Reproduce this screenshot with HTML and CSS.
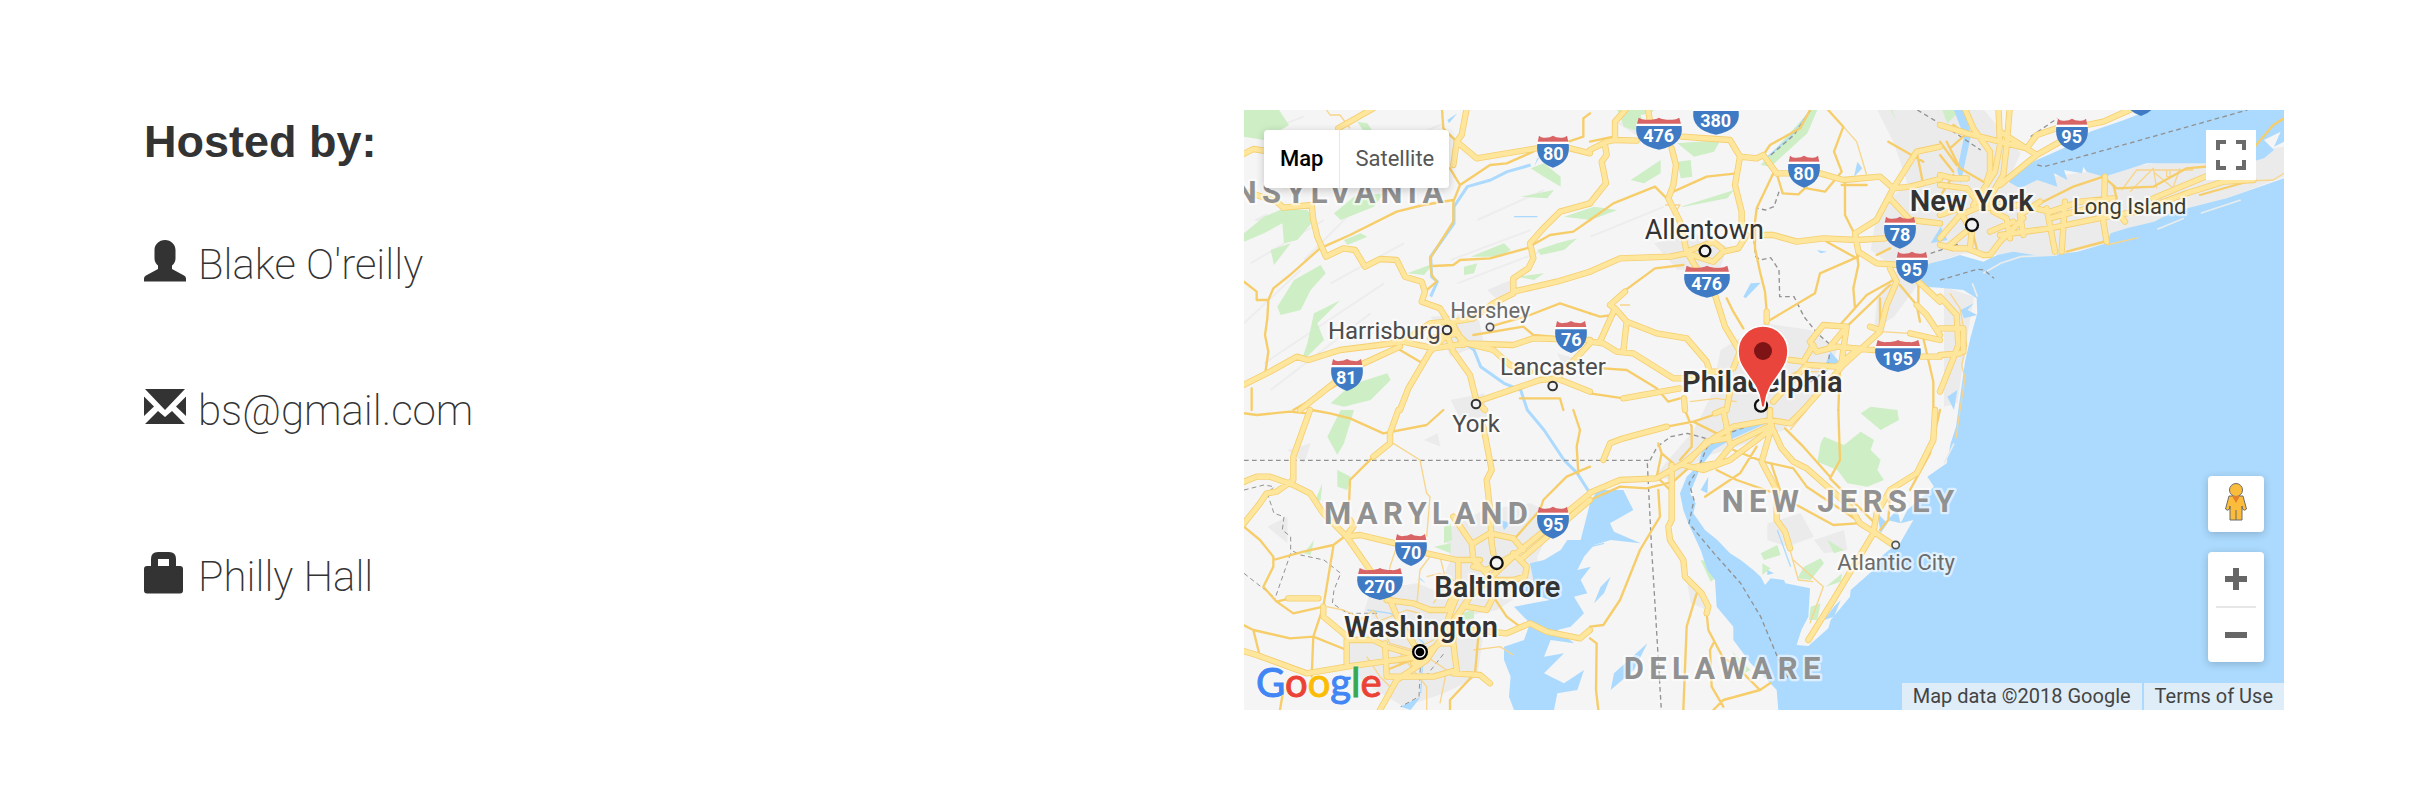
FILE: index.html
```html
<!DOCTYPE html>
<html lang="en">
<head>
<meta charset="utf-8">
<title>Hosted by</title>
<link rel="stylesheet" href="styles.css">
</head>
<body>
<main class="event">
  <section class="host">
    <h2 class="host-title">Hosted by:</h2>
    <ul class="host-list">
      <li class="host-item">
        <svg class="icon" viewBox="0 0 42 42" aria-hidden="true"><path d="M21 0C27 0 31.500 4.500 31.500 10V18.500C31.500 21.500 30 24 28 25.500V29L40 35.500Q42 36.700 42 38.500V41.500H0V38.500Q0 36.700 2 35.500L14 29V25.500C12 24 10.500 21.500 10.500 18.500V10C10.500 4.500 15 0 21 0Z"/></svg>
        <span>Blake O'reilly</span>
      </li>
      <li class="host-item">
        <svg class="icon" viewBox="0 0 42 42" aria-hidden="true"><path d="M1 3H41L21 24ZM0 10.500L10 20.500 0 30ZM42 10.500V30L32 20.500ZM1 38L14 25 21 31 28 25 41 38Z"/></svg>
        <span>bs@gmail.com</span>
      </li>
      <li class="host-item host-item-venue">
        <svg class="icon" viewBox="0 0 42 42" aria-hidden="true"><path fill-rule="evenodd" d="M7 14V7Q7 0 14 0H25Q32 0 32 7V14H36Q39 14 39 17V38.500Q39 41.500 36 41.500H3Q0 41.500 0 38.500V17Q0 14 3 14ZM14 14H25V7H14Z"/></svg>
        <span>Philly Hall</span>
      </li>
    </ul>
  </section>

  <section class="map" aria-label="Map">
    <svg class="map-canvas" viewBox="0 0 3120 1800" preserveAspectRatio="xMidYMid slice">
      <defs>
        <g id="shield-2">
          <path fill="#d96466" d="M6 0Q14 8 25 6Q40 6 48 0Q56 6 71 6Q82 8 90 0L94 19H2Z"/>
          <path fill="#fff" d="M0 18H96V27H0Z"/>
          <path fill="#3e7bc4" d="M1 25H95Q102 78 48 96Q-6 78 1 25Z"/>
        </g>
        <g id="shield-3">
          <path fill="#d96466" d="M8 0Q20 8 35 6Q58 6 69 0Q80 6 103 6Q118 8 130 0L135 19H3Z"/>
          <path fill="#fff" d="M0 18H138V27H0Z"/>
          <path fill="#3e7bc4" d="M1 25H137Q144 82 69 96Q-6 82 1 25Z"/>
        </g>
        <g id="highways">
          <path transform="translate(-12 -15)" d="M0 152L40 132 90 140M0 255L50 270 110 290 130 308 215 300 220 345 232 395 258 455 310 430 345 435 375 485 420 462 470 465 495 515 545 530 555 560 545 590 600 610 625 650 655 690 680 715 820 720 880 700 1050 705M0 845L90 800 170 755 205 765 300 735 420 720 490 710 570 655 625 650M490 710L580 730 680 715 760 735 810 780 870 800M570 700L655 685M625 700L640 740 690 810 710 890 735 915M180 915L300 820 360 780 480 725M480 915L505 850 570 740 620 690M295 70L400 10M682 0L665 90 650 110 710 160 890 130M650 110L640 180M990 130L1050 145M1050 295L960 320 910 370 870 415 880 460 865 490 820 520 820 560 950 530 1050 500M640 650L700 640 760 595 820 565M640 660L670 720M710 890L900 825 950 820 1050 715M950 820L1050 860"/>
          <path transform="translate(1038 -15)" d="M0 135L50 110 75 105 140 107M75 105L75 50 110 10M45 120L50 150 35 170 48 235 0 295M172 0L180 50M245 130L258 180 250 240 235 280 270 350 290 440 320 490M275 95L420 105 450 155 500 160 520 150 560 205 600 205M690 205L760 225 870 215 910 250M450 155L435 240 455 320 455 360M470 390L445 430 400 440 370 470 290 445 240 455 90 460 0 500M290 440L370 410 395 430M520 390L550 390 620 410 700 400 800 405 885 400M910 250L860 345 795 385 805 440 860 475 930 480M910 250L980 140 1050 125M910 250L960 245 1050 222M900 280L960 345 1050 355M375 570L405 665 450 740 430 790M900 490L920 530 890 600 870 680 760 780 640 915M985 530L1050 590M980 600L1010 630 1050 690M0 710L40 715 80 740 130 745 250 820 330 820M75 610L60 600 105 560M75 610L110 650 200 685 290 700 350 770 360 800 390 800M110 650L100 740M75 610L30 710M100 880L270 850M660 710L700 660 770 665 755 770M770 665L720 725M660 710L680 740 740 725 850 735M655 780L740 785 800 735M600 765L640 770 670 720M840 665L870 675M960 685L1050 705M995 755H1050M410 915L420 860 400 820M530 650L530 620M285 915L282 880M550 890L650 780"/>
          <path transform="translate(2088 -15)" d="M0 60L80 85 180 110 260 130 290 90 350 70M70 0L100 70 150 140 150 200 140 230M175 0L180 120 165 200 100 300M210 0L200 120 190 210 130 310M0 210L40 220 80 220M0 240L80 250 130 310M290 150L180 80M180 240L290 150 360 110M440 60L490 50 580 10M0 420L40 430 80 430 130 450 150 450 180 410 250 340M95 380L90 430M0 330L60 310M0 400L60 330 180 280M60 320L90 370 30 420M130 310L240 300 330 320 420 290 520 280M320 310L345 440M375 290L365 440M180 390L330 370 500 335 590 320 740 265 850 230 940 225M495 215L490 350 500 410M210 400L200 340 160 320M250 390L240 330 300 290M640 280L760 230 820 205M330 340L480 300M540 330L555 350M150 380L220 350M0 575L50 630 55 720 40 760 0 860M0 670L70 670 70 740M0 750L60 745"/>
          <path transform="translate(-12 900)" d="M0 220L50 200 90 200 160 225 210 250 250 310 320 380 360 375 465 400M560 430L650 450 720 450M320 380L390 480M0 355L60 280 80 250 110 245 160 210 160 140 210 0M320 375L340 350 330 330M475 0L450 70 450 100 400 140M730 50L755 180 740 210 750 300 755 400 760 430M700 400L750 370 820 385 850 420M1050 250L830 430 690 560 600 690 560 750 470 810 420 900M1050 270L840 450M640 320L695 400 700 450 760 510 820 510 855 500 860 470 820 430M655 455L655 520 620 600M440 570L520 580 570 600 630 600M450 570L480 640 520 700 540 740M250 590L250 620 310 670 330 690 400 690 440 710 540 740 600 700 640 700 650 780 580 800 440 800 435 700M320 690L320 760M0 720L50 735 200 790 320 770 430 755 540 740M640 790L720 795 750 820M700 660L800 670 870 640 920 665 1020 685 1050 660M145 565L235 565M690 560L640 640 640 690M650 560L600 690M680 590L740 600 760 560M700 470L740 480 830 430M520 760L600 700"/>
          <path transform="translate(1038 900)" d="M0 248L90 210 200 205 280 160 370 85 430 50 540 30 600 40 640 0M280 165L340 180 420 150 500 90 545 55M320 170L380 160 430 100 545 45M540 0V40M545 50L515 155 560 240 560 330 585 365 600 415M545 50L575 115 610 155 650 175 780 290 810 340 850 365 910 405M40 150L60 100 100 85 230 50M375 10L400 0 410 50 420 100M245 165L245 330 235 350 240 390 280 450 285 500 335 550 355 590 350 610M655 690L730 570 850 370 860 310 900 240 980 190 1030 90 1035 0M300 150L350 95 410 85"/>
        </g>
      </defs>

      <rect width="3120" height="1800" fill="#f5f5f5"/>

      <g class="urban">
        <path d="M1900 0H2220L2330 130 2290 220 2500 190 3120 110V200L2590 400 2430 440 2160 430 2060 460 2010 540 1950 620 1890 660 1900 560 1960 480 1880 420 1900 300 1990 220 1950 100Z"/>
        <path d="M1430 720L1560 640 1700 660 1780 720 1720 850 1620 960 1480 1010 1380 1040 1290 1110 1230 1100 1350 960 1400 860Z"/>
        <path d="M600 1260L720 1200 860 1180 940 1220 880 1340 880 1420 760 1500 650 1520 580 1440 620 1350Z"/>
        <path d="M380 1440L520 1420 640 1470 720 1560 700 1700 600 1750 480 1790 360 1720 300 1640 350 1540Z"/>
        <path d="M1230 400L1350 370 1450 410 1430 470 1300 480ZM560 620L700 610 720 700 620 740ZM730 540L800 510 800 560 760 570ZM620 870L720 850 730 920 650 930ZM1570 1240L1670 1210 1710 1280 1630 1310 1570 1290ZM1710 1290L1800 1260 1810 1320 1740 1330Z"/>
        <path d="M70 1250L130 1220 130 1300ZM130 1020L200 1000 180 1060ZM540 990L580 970 590 1010ZM940 730L1010 750 960 780ZM1330 1420L1370 1440 1390 1500 1340 1480ZM2100 530L2190 560 2160 740 2140 880 2100 890ZM1120 40L1180 20 1200 90ZM30 330L70 310 60 340Z"/>
      </g>
      <g class="hills">
        <path d="M60 760L420 520M80 840L380 610M260 520L480 400M20 460L240 330M620 450L860 360M640 520L980 390M700 330L900 240M1040 380L1260 290M0 640L170 480M180 450L330 300M20 80L180 20M480 90L600 40"/>
      </g>
      <g class="parks">
        <path d="M0 0H105L135 45 60 90 0 80ZM340 35L370 40 390 70 360 65ZM0 370L60 320 120 295 190 300 210 330 160 390 120 400 115 340 60 370 0 395Z"/>
        <path d="M80 420L140 400 90 465ZM270 310L330 260 420 250 390 290 290 330ZM300 390L350 370 370 380 310 405ZM100 590L150 510 230 465 245 490 200 540 170 600 110 615Z"/>
        <path d="M210 610L290 570 220 640 240 690 170 760 190 700ZM260 880L320 825 430 790 440 810 380 870 300 890ZM860 175L900 160 950 200 950 230 900 200ZM830 260L930 240 910 265ZM680 440L780 400 800 420 770 440Z"/>
        <path d="M960 320L1050 290 1120 300 1040 330ZM880 420L940 400 1000 385 960 420 890 435ZM660 470L700 460 690 490 660 495ZM490 490L570 460 540 495ZM820 500L900 490 870 510ZM250 980L290 900H330L300 1000 280 1035Z"/>
        <path d="M1170 60L1200 50 1190 15 1220 10 1230 0H1120L1140 50ZM1300 100L1430 90 1410 125 1350 140ZM1160 210L1250 150 1250 190 1200 220ZM1300 155L1340 150 1345 200 1310 205ZM1310 290L1440 250 1470 240 1450 265 1320 290ZM1550 165L1600 110 1700 0H1720L1690 70 1580 170Z"/>
        <path d="M1720 1055L1730 1000 1740 980 1800 1005 1850 965 1890 990 1880 1020 1910 1050 1900 1080 1920 1110 1870 1130 1810 1120 1780 1080ZM1850 910L1880 890 1960 900 1965 930 1910 960Z"/>
        <path d="M1550 1330L1600 1305 1610 1335 1560 1350ZM1555 1360L1580 1375 1555 1395ZM1680 1370L1730 1345 1740 1360 1700 1410 1660 1405ZM1370 1350L1400 1355 1420 1400 1400 1415ZM1700 1490L1730 1480 1720 1530 1695 1530ZM1745 1430L1795 1390 1790 1415ZM1750 1290L1800 1320 1770 1330Z"/>
        <path d="M600 1250L620 1240 625 1290 600 1300ZM570 1310L620 1300 620 1330ZM655 1510L690 1500 690 1525 660 1530ZM280 1080L320 1100 310 1140 280 1130ZM210 1180L235 1120 230 1170ZM180 1330L210 1290 200 1335ZM1465 1625L1520 1680 1500 1690ZM2095 0H2150L2110 40ZM1940 0L1955 30 1945 0Z"/>
      </g>

      <g class="water">
        <path d="M2718 0H3120V1800H1603L1598 1740 1570 1710 1520 1660 1468 1590 1468 1550 1418 1490 1413 1410 1390 1380 1370 1320 1333 1240 1318 1200 1308 1150 1328 1100 1363 1065 1375 1020 1395 990 1458 965 1568 925V940L1468 985 1408 1020 1370 1070 1358 1100 1338 1150 1355 1180 1348 1210 1383 1260 1420 1290 1458 1330 1490 1350 1528 1380 1550 1400 1563 1425 1580 1405 1620 1410 1624 1420 1698 1435 1693 1520 1672 1560 1658 1605 1693 1608 1753 1555 1760 1530 1785 1500 1818 1460 1820 1440 1888 1380 1900 1350 1935 1320 1968 1300 2008 1230 1970 1240 1990 1200 2070 1130 2050 1100 2108 1060 2120 1000 2136 950 2145 885 2163 755 2180 680 2200 610 2198 565 2158 540 2088 533 2040 530 2020 480 2060 460 2118 445 2148 435 2218 455 2260 435 2308 425 2370 435 2428 435 2500 425 2588 400 2600 370 2648 355 2730 335 2788 305 2948 265 3120 205V95L3090 110 3110 65 3060 90 3090 120 3060 145 2990 165 2888 160 2708 160 2628 185 2580 200 2528 185 2518 170 2514 190 2460 180 2470 210 2430 190 2440 230 2380 210 2328 235 2293 215 2330 175 2378 150 2468 110 2538 65 2640 30Z"/>
        <path d="M1038 1180L1060 1140 1138 1140 1150 1165 1168 1200 1098 1240 1110 1265 1190 1300 1100 1290 1050 1305 1020 1340 1000 1380 1040 1370 1010 1410 1030 1450 990 1460 1020 1510 980 1550 940 1560 990 1600 920 1590 900 1640 960 1630 900 1690 960 1720 1020 1680 1000 1740 940 1750 930 1800H810L795 1760 800 1700 780 1650 780 1610 840 1590 858 1540 810 1490 918 1470 860 1450 800 1430 870 1420 858 1360 900 1350 950 1320 970 1290 1010 1290Z"/>
        <path d="M1393 1100L1370 1140 1390 1150ZM1570 1380L1590 1390 1570 1395ZM1718 420L1750 425 1730 430ZM1498 560L1520 520 1550 518 1505 565ZM1745 760L1760 725 1790 760 1750 770ZM2150 1040L2105 1050 2130 1005ZM1830 200L1840 155 1855 175ZM870 170L890 135 910 130 880 145ZM610 30L640 10 615 40ZM525 1400L545 1420 530 1410ZM2130 0H2170L2180 80 2150 220 2140 180 2160 80ZM2045 485L2110 480 2110 520 2060 530Z"/>
        <path d="M2150 600L2190 580 2170 600 2200 615 2160 625ZM2110 860L2140 840 2130 900ZM1900 1210L1930 1240 1910 1270ZM1930 1230L1960 1200 1970 1240ZM1740 1530L1770 1490 1790 1470 1770 1520ZM2090 350L2060 400 2110 390ZM1170 1680L1210 1600 1110 1690 1100 1740ZM1050 1480L1080 1450 1100 1400 1070 1430ZM770 1230L800 1240 780 1260ZM470 1790L530 1760 500 1800Z"/>
        <g class="rivers">
          <path d="M860 165L790 185 740 210 670 230 630 290 630 340 560 440 563 500 580 515 560 560 M610 660L690 720 710 770 780 820 830 840 850 900 900 960 960 1050 1000 1090 1038 1150"/>
          <path class="creek" d="M810 320L880 320M1700 0L1640 80 1560 150M1600 1260L1640 1370M370 1500L440 1510 540 1600 530 1750M1080 1300L1040 1310"/>
        </g>
      </g>

      <g class="barrier">
        <path d="M2218 490L2270 460 2330 440 2440 435M2740 358L2820 325M2185 520L2200 560M2870 310L2990 270M2100 1060L2130 1000"/>
      </g>

      <g class="borders">
        <path d="M0 1051H1218M1218 1051L1240 1010 1280 980 1330 970 1385 985M1210 1060L1222 1300 1240 1600 1252 1800M1568 930L1450 970 1390 1010 1360 1080 1335 1120 1350 1170 1335 1240 1410 1330 1490 1420 1550 1520 1600 1640 1635 1710"/>
        <path d="M1700 0L1650 75 1575 140M1605 245L1590 290 1565 300 1540 295M1530 390L1535 440 1550 450 1580 443 1605 480 1607 560 1650 560 1680 620 1720 670 1760 705 1750 780 1650 850"/>
        <path d="M2088 510L2200 478 2220 480 2250 505M2380 165L2400 170 2530 135 3010 0M2360 80L2440 25M2350 100L2370 150M2020 0L2120 60 2210 120M2060 430L2150 400"/>
        <path class="border-river" d="M0 1140L60 1125 90 1130 70 1150 90 1210 120 1220 115 1260 140 1280 140 1320 170 1335 240 1350 290 1390 270 1440 265 1480 310 1510 400 1510M140 1330L95 1460M0 1390L95 1465M530 1650L525 1760 470 1790M545 1700L600 1630"/>
      </g>

      <g class="roads-thin">
        <path transform="translate(-12 900)" d="M460 100L540 150 560 250 570 260 560 380M470 410L450 470 440 560M570 440L540 480 530 590M560 500L600 490 660 520M260 590L310 600 400 640 500 600 540 610M350 640L400 600 450 700 520 720 580 690 600 640M560 740L620 780 600 880M480 730L560 830 560 900M380 740L420 800 460 840M700 720L780 710 820 735M600 440L620 520 580 580"/>
        <path transform="translate(1038 900)" d="M600 420L625 510 670 515M610 450L700 530 660 640M650 0L600 60"/>
        <path transform="translate(1038 -15)" d="M760 65L800 110 830 210M225 300L270 300 250 330M90 600L120 600M300 890L380 880 440 890M870 680L960 685M560 830L620 800 700 800"/>
        <path transform="translate(2088 -15)" d="M30 565L60 610 80 720 65 780 75 820 60 915 48 1000M545 255L590 195 760 195M570 260L640 190 650 250M640 200L700 250M720 190L700 245M680 195V215H690V195M500 420L595 398M880 230L1000 225 1032 205"/>
        <path transform="translate(-12 -15)" d="M250 0L270 30 300 30 330 70"/>
      </g>
      <g class="roads-minor">
        <path transform="translate(-12 -15)" d="M1050 25L1030 40 1030 95 985 110M605 0L610 70 650 110M630 190L660 240 640 290 640 350 570 460 575 510 590 530 555 560M660 240L750 180 800 175 880 140M1050 345L1000 380 930 390 860 430 750 460 660 465 640 480 580 483M12 530L50 560 50 585 85 585 100 550 150 510 240 430 330 390 470 320 550 300 640 285M85 585L82 640 75 690 85 740 75 810M480 735L540 770M700 690L850 665 880 690 940 695M870 630L960 595 1050 625M750 665L870 630M35 915L35 850M130 308L215 298M240 430L235 395M160 915L290 840M840 880L960 880 970 915"/>
        <path transform="translate(1038 -15)" d="M710 10L760 65 732 140 755 200 705 260 650 250M520 150L540 120 630 70 660 15M550 205L500 310 495 350 495 430 510 500 525 560 530 620M560 205L578 265 625 268 650 245M0 345L70 295 195 245 230 280M250 260L350 215 440 205M765 230L765 330 795 390 805 480 790 550 795 610 750 660M710 410L800 460M805 455L690 505 675 565 540 645M895 110L1000 170M755 240L830 240M0 625L30 635 70 630M100 560L195 490 280 480M410 580L430 620 460 670M750 660L830 570 920 520M770 665L900 540M870 660L870 580M930 540L980 600 990 650M985 530L985 620M860 450L900 430M40 790L110 795 200 850 235 890 270 880M0 865L100 880M600 770L650 770M750 790L745 915M1000 700L1030 830 1030 915M980 140L1000 240M0 110L70 95"/>
        <path transform="translate(2088 -15)" d="M290 300L400 245 490 215 530 250 640 245 740 190 850 180M380 440L500 408M940 130L1000 60 1032 40M20 110L60 190 130 230M75 90L30 130M0 150L40 200M80 90L40 60M520 240L530 280M780 270L940 225M0 110L50 180M0 275L40 210M100 390L110 430"/>
        <path transform="translate(-12 900)" d="M0 8L50 15 150 5 200 10M215 0L270 10 330 25 430 70 560 45 610 0M400 140L330 210 325 330M0 340L60 390 100 440 100 470 70 530 110 575 150 565M100 450L190 425 280 405 340 360M280 410L265 500 250 590 220 680 215 800M220 680L320 720M220 680L150 685 40 660 0 640M40 660L60 740M250 590L160 610 110 575M1050 170L980 200 910 270 900 300 820 390M1000 0L1020 60 1010 110 1015 190M760 560L800 620 840 650M715 680L705 790 630 870 630 900M130 840L120 900M560 750L420 760M540 740L440 780"/>
        <path transform="translate(1038 900)" d="M230 50L310 35 370 15M285 0L305 50 305 110 270 150M310 35L380 70M205 100L215 130 200 200 240 240M215 130L250 160M0 270L90 230 170 235 250 215 300 170M205 240L210 320 150 420 90 570 40 645 0 650M320 550L290 650 280 900M350 610L355 660 400 745 430 760 510 840 540 820M370 700L360 720 365 830 400 890M510 840L400 870 370 900M0 685L20 700 18 840 25 900M380 180L440 210 540 245M620 285L730 345 800 340M345 260L450 190 500 110M430 120L520 155 610 175 650 230 800 330M545 165L570 240M745 0L750 150 720 205 850 335M585 55L640 110 720 200M870 360L895 330 900 260M960 240L1020 130 1050 0"/>
      </g>
      <use class="highway-casing" href="#highways"/>
      <use class="highway-fill" href="#highways"/>

      <g class="dots dots-small">
        <circle cx="738" cy="651" r="11"/><circle cx="1955" cy="1305" r="11"/>
      </g>
      <g class="dots dots-town">
        <circle cx="609" cy="660" r="13"/><circle cx="926" cy="828" r="13"/><circle cx="696" cy="882" r="13"/>
      </g>
      <g class="dots">
        <circle cx="1383" cy="423" r="16"/><circle cx="1551" cy="887" r="18"/>
        <circle cx="2184" cy="345" r="18"/><circle cx="758" cy="1359" r="18"/>
      </g>
      <circle cx="528" cy="1626" r="24"/><circle cx="528" cy="1626" r="15" fill="none" stroke="#fff" stroke-width="4"/>

      <g class="label label-state">
        <text x="614" y="278" text-anchor="end" class="label-end">NSYLVANIA</text>
        <text x="554" y="1242">MARYLAND</text>
        <text x="1790" y="1205">NEW JERSEY</text>
        <text x="1442" y="1707">DELAWARE</text>
      </g>
      <g class="label label-small">
        <text x="739" y="623">Hershey</text>
        <text x="1956" y="1380">Atlantic City</text>
      </g>
      <g class="label label-town">
        <text x="421" y="687">Harrisburg</text>
        <text x="927" y="795">Lancaster</text>
        <text x="696" y="965">York</text>
      </g>
      <g class="label label-island"><text x="2657" y="312">Long Island</text></g>
      <g class="label label-large"><text x="1381" y="387">Allentown</text></g>
      <g class="label label-city">
        <text x="1555" y="847">Philadelphia</text>
        <text x="2183" y="303">New York</text>
        <text x="760" y="1462">Baltimore</text>
        <text x="531" y="1582">Washington</text>
      </g>

      <g class="shields">
        <use href="#shield-2" x="879" y="77"/><text x="928" y="151">80</text>
        <use href="#shield-2" x="261" y="747"/><text x="307" y="821">81</text>
        <use href="#shield-2" x="933" y="633"/><text x="982" y="707">76</text>
        <use href="#shield-3" x="1176" y="23"/><text x="1244" y="97">476</text>
        <use href="#shield-3" x="1347" y="-22"/><text x="1415" y="52">380</text>
        <use href="#shield-2" x="1632" y="137"/><text x="1679" y="211">80</text>
        <use href="#shield-2" x="1920" y="320"/><text x="1968" y="394">78</text>
        <use href="#shield-2" x="1956" y="425"/><text x="2003" y="499">95</text>
        <use href="#shield-3" x="1320" y="467"/><text x="1388" y="541">476</text>
        <use href="#shield-3" x="1893" y="690"/><text x="1961" y="764">195</text>
        <use href="#shield-2" x="2436" y="26"/><text x="2483" y="100">95</text>
        <use href="#shield-2" x="2643" y="-78"/>
        <use href="#shield-2" x="879" y="1190"/><text x="928" y="1264">95</text>
        <use href="#shield-2" x="453" y="1272"/><text x="501" y="1346">70</text>
        <use href="#shield-3" x="339" y="1374"/><text x="407" y="1448">270</text>
      </g>

      <path fill="#ea453c" stroke="#fff" stroke-width="5" d="M1557 893C1552 893 1551 889 1550 878C1544 828 1515 807 1493 768Q1482 750 1482 723A75 75 0 0 1 1632 723Q1632 750 1621 768C1599 807 1570 828 1564 878C1563 889 1562 893 1557 893Z"/>
      <circle cx="1557" cy="723" r="27" fill="#7f1416"/>
    </svg>

    <div class="map-types">
      <button class="map-type map-type-active" type="button">Map</button>
      <button class="map-type" type="button">Satellite</button>
    </div>

    <button class="control fullscreen" type="button" aria-label="Toggle fullscreen view">
      <svg width="30" height="30" viewBox="0 0 30 30"><path fill="none" stroke="#6b6b6b" stroke-width="4" d="M2 10V2H10M20 2H28V10M28 20V28H20M10 28H2V20"/></svg>
    </button>

    <div class="map-tools">
      <button class="control pegman" type="button" aria-label="Street View">
        <svg width="24" height="40" viewBox="0 0 24 40"><g fill="#fbbc3c" stroke="#6b6b6b"><path d="M5 14H19L22.500 27Q20.500 29.500 18.500 27L18 24V38H6V24L5.500 27Q3.500 29.500 1.500 27Z"/><circle cx="12" cy="8" r="6.500"/></g><path fill="#e3812b" d="M8 14H16L12 21Z"/><path stroke="#6b6b6b" d="M12 28V38"/></svg>
      </button>
      <div class="zoom">
        <button class="zoom-button" type="button" aria-label="Zoom in"><svg width="22" height="22" viewBox="0 0 22 22"><path fill="#666" d="M8 0H14V8H22V14H14V22H8V14H0V8H8Z"/></svg></button>
        <button class="zoom-button" type="button" aria-label="Zoom out"><svg width="22" height="22" viewBox="0 0 22 22"><path fill="#666" d="M0 8H22V14H0Z"/></svg></button>
      </div>
    </div>

    <a class="google" href="#" aria-label="Google"><span class="blue">G</span><span class="red">o</span><span class="yellow">o</span><span class="blue">g</span><span class="green">l</span><span class="red">e</span></a>

    <div class="attribution">
      <span class="attribution-item">Map data ©2018 Google</span>
      <a class="attribution-item" href="#">Terms of Use</a>
    </div>
  </section>
</main>
</body>
</html>
```

FILE: styles.css
```css
* { box-sizing: border-box; }

body {
  margin: 0;
  background: #fff;
  color: #333;
  font-family: "Liberation Sans", Arial, sans-serif;
}

button { margin: 0; padding: 0; border: 0; background: #fff; font: inherit; cursor: pointer; }
svg { display: block; }

.event {
  display: grid;
  grid-template-columns: 1fr 1fr;
  gap: 60px;
  padding: 110px 140px 96px 144px;
}

.host-title {
  margin: 0;
  padding-top: 6px;
  font-size: 45px;
  line-height: 52px;
  font-weight: 700;
}

.host-list {
  display: grid;
  gap: 90px;
  margin: 69px 0 0;
  padding: 0;
  list-style: none;
}

.host-item {
  display: flex;
  align-items: center;
  gap: 12px;
  font-family: Roboto, "Liberation Sans", sans-serif;
  font-size: 42px;
  font-weight: 200;
  line-height: 56px;
}

.host-item-venue { margin-top: 20px; }

.icon { width: 42px; height: 42px; margin-bottom: 8px; fill: #333; }

.map {
  position: relative;
  height: 600px;
  overflow: hidden;
  background: #f5f5f5;
  font-family: Roboto, sans-serif;
}

.map-canvas { width: 100%; height: 100%; }

.urban { fill: #ebebeb; }
.hills { fill: none; stroke: #ededed; stroke-width: 6; }
.parks { fill: #ceeec6; }
.water { fill: #abdafe; }
.rivers { fill: none; stroke: #abdafe; stroke-width: 9; stroke-linejoin: round; }
.creek { stroke-width: 4; }
.barrier { fill: none; stroke: #e9eceb; stroke-width: 5; }
.borders { fill: none; stroke: #929292; stroke-width: 4; stroke-dasharray: 14 10; }
.border-river { stroke-width: 3; }
.roads-thin { fill: none; stroke: #f8d58a; stroke-width: 4; stroke-linejoin: round; }
.roads-minor { fill: none; stroke: #f6cd69; stroke-width: 7; stroke-linejoin: round; stroke-linecap: round; }
.highway-casing { fill: none; stroke: #f5cf70; stroke-width: 19; stroke-linejoin: round; stroke-linecap: round; }
.highway-fill { fill: none; stroke: #ffe69d; stroke-width: 14; stroke-linejoin: round; stroke-linecap: round; }

.dots { fill: #f3f3f3; stroke: #111; stroke-width: 7; }
.dots-town { stroke: #333; stroke-width: 6; }
.dots-small { stroke: #555; stroke-width: 5; }

.label {
  text-anchor: middle;
  paint-order: stroke;
  stroke: rgba(255, 255, 255, .6);
  stroke-width: 14px;
  stroke-linejoin: round;
}
.label-end { text-anchor: end; }
.label-state { font-size: 93px; font-weight: 700; letter-spacing: 16px; fill: #919191; }
.label-small { font-size: 66px; fill: #6b6b6b; }
.label-town { font-size: 72px; fill: #4c4c4c; }
.label-island { font-size: 66px; fill: #3c3c30; }
.label-large { font-size: 81px; fill: #333; }
.label-city { font-size: 87px; font-weight: 600; fill: #333; }
.shields text { font-size: 54px; font-weight: 700; fill: #fff; text-anchor: middle; }

.map-types {
  position: absolute;
  top: 20px;
  left: 20px;
  display: flex;
  border-radius: 4px;
  box-shadow: 0 2px 8px rgba(0, 0, 0, .2);
}

.map-type {
  height: 58px;
  padding: 0 15px 2px;
  border-radius: 0 4px 4px 0;
  color: #565656;
  font-size: 22px;
}

.map-type-active {
  padding: 0 16px 2px;
  border-right: 1px solid #e8e8e8;
  border-radius: 4px 0 0 4px;
  color: #000;
  font-weight: 500;
}

.control { display: grid; place-items: center; }
.fullscreen { position: absolute; top: 20px; right: 28px; width: 50px; height: 50px; }

.map-tools {
  position: absolute;
  right: 20px;
  bottom: 48px;
  display: grid;
  gap: 20px;
  width: 56px;
}

.pegman { height: 56px; padding-bottom: 4px; }
.pegman, .zoom { border-radius: 4px; background: #fff; box-shadow: 0 2px 8px rgba(0, 0, 0, .2); }
.zoom { padding: 0 8px; }
.zoom-button { display: grid; place-items: center; width: 40px; height: 54px; }
.zoom-button + .zoom-button { height: 56px; border-top: 2px solid #e6e6e6; }

.google {
  position: absolute;
  left: 12px;
  bottom: 4px;
  font-family: Lato, sans-serif;
  font-size: 40px;
  line-height: 48px;
  text-decoration: none;
  -webkit-text-stroke: 1px currentColor;
  text-shadow: 0 0 2px #fff, 0 0 3px #fff;
}
.blue { color: #4285f4; }
.red { color: #ea4335; }
.yellow { color: #fbbc05; }
.green { color: #34a853; }

.attribution {
  position: absolute;
  right: 0;
  bottom: 0;
  display: flex;
  gap: 2px;
  color: #444;
  font-size: 20px;
  line-height: 27px;
}
.attribution-item {
  padding: 0 11px;
  background: rgba(245, 245, 245, .7);
  color: inherit;
  text-decoration: none;
}
```
